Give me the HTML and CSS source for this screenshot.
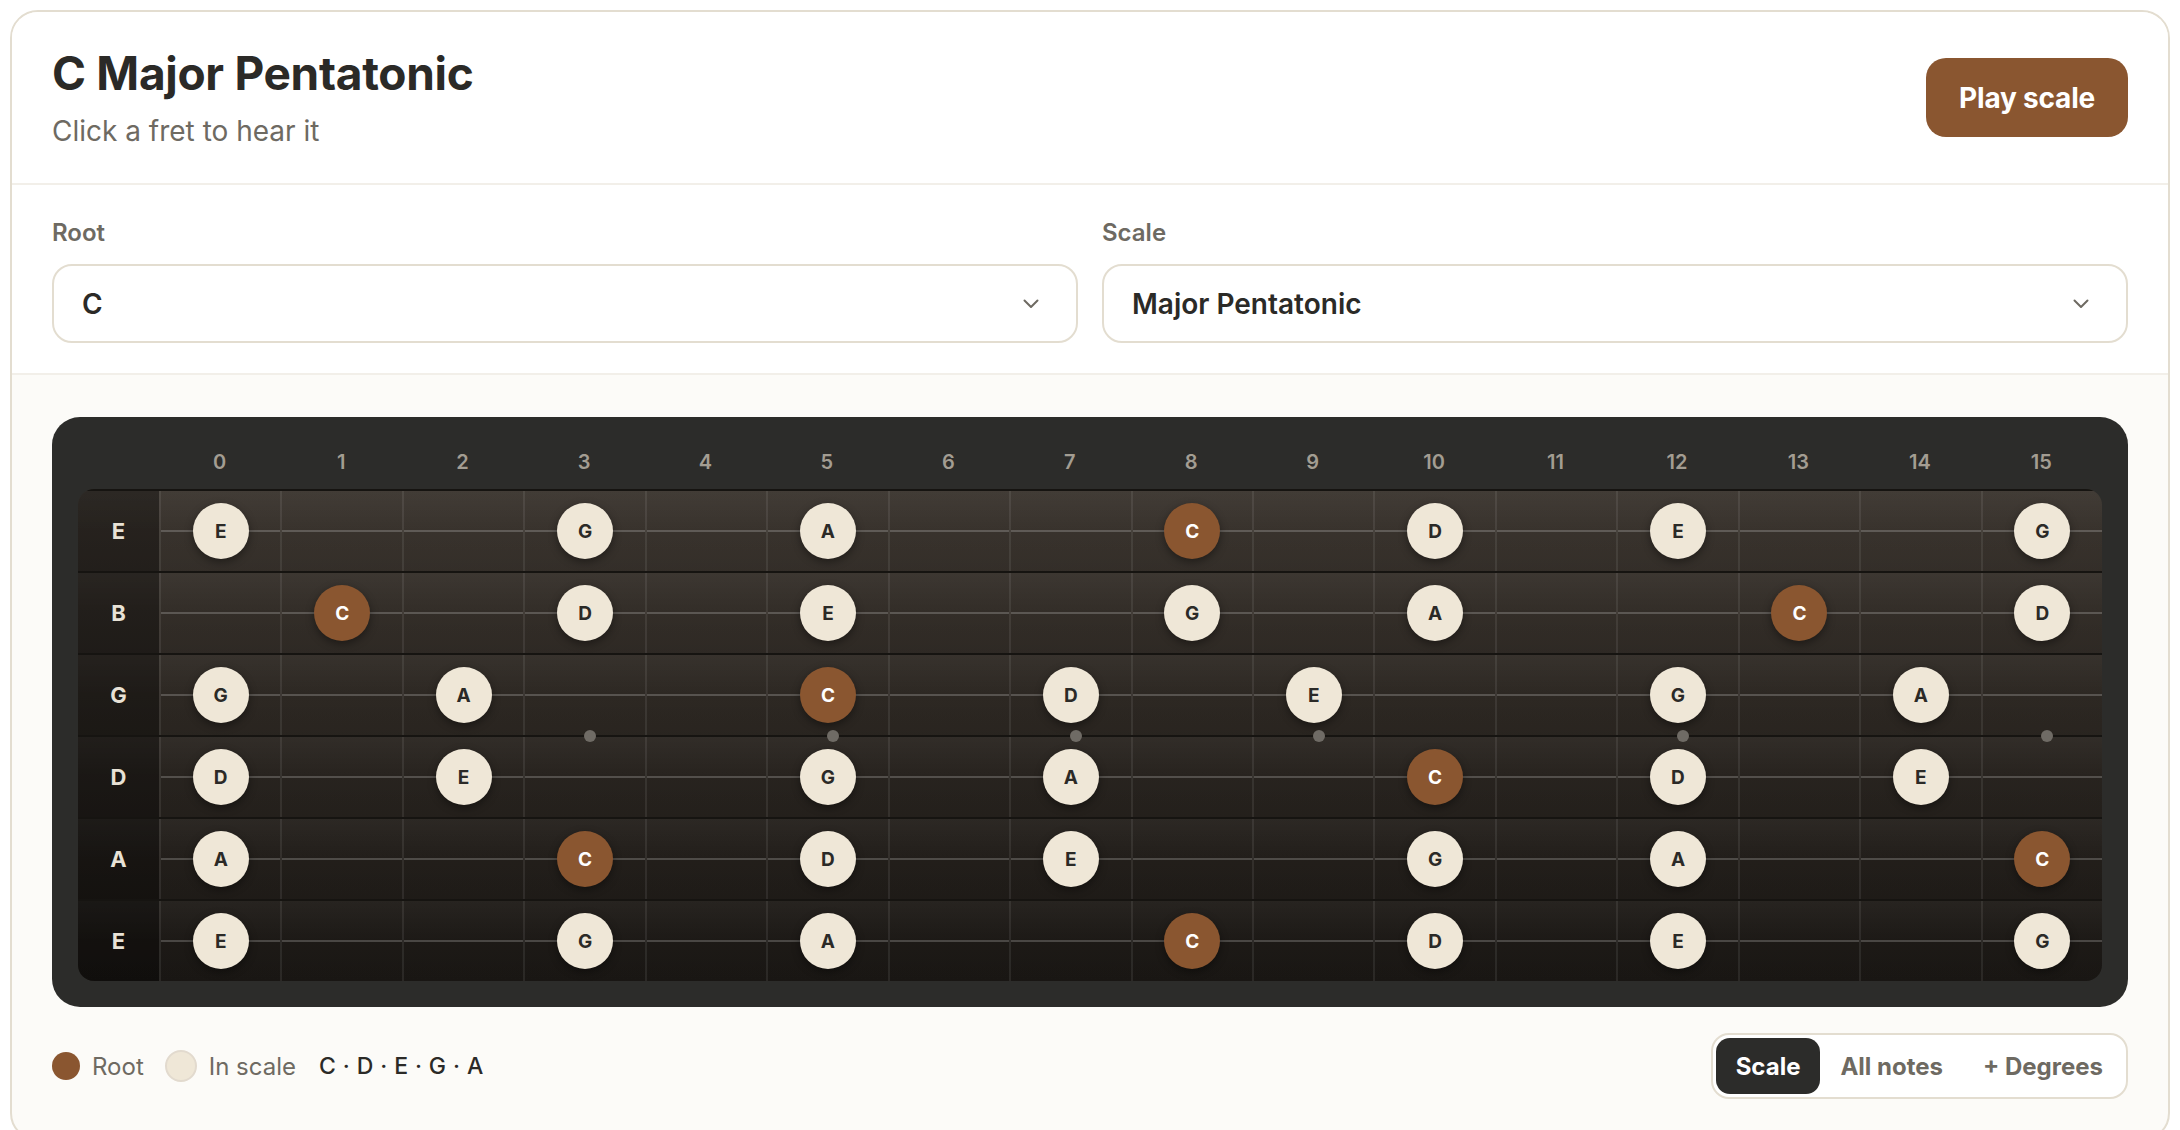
FILE: index.html
```html
<!DOCTYPE html>
<html lang="en">
<head>
<meta charset="utf-8">
<title>C Major Pentatonic</title>
<link rel="stylesheet" href="styles.css">
</head>
<body>
<div class="card">
  <header class="header">
    <div class="heading">
      <h1 class="title">C Major Pentatonic</h1>
      <p class="subtitle">Click a fret to hear it</p>
    </div>
    <button class="play">Play scale</button>
  </header>

  <section class="controls">
    <div class="field">
      <div class="label">Root</div>
      <div class="select"><span>C</span>
        <svg class="chev" width="16" height="10" viewBox="0 0 16 10"><path d="M1.5 1.5 L8 8 L14.5 1.5" fill="none" stroke="#6e6a62" stroke-width="2" stroke-linecap="round" stroke-linejoin="round"/></svg>
      </div>
    </div>
    <div class="field">
      <div class="label">Scale</div>
      <div class="select"><span>Major Pentatonic</span>
        <svg class="chev" width="16" height="10" viewBox="0 0 16 10"><path d="M1.5 1.5 L8 8 L14.5 1.5" fill="none" stroke="#6e6a62" stroke-width="2" stroke-linecap="round" stroke-linejoin="round"/></svg>
      </div>
    </div>
  </section>

  <section class="board-section">
    <div class="panel">
      <div class="numbers">
        <span>0</span><span>1</span><span>2</span><span>3</span><span>4</span><span>5</span><span>6</span><span>7</span><span>8</span><span>9</span><span>10</span><span>11</span><span>12</span><span>13</span><span>14</span><span>15</span>
      </div>
      <div class="board">
        <div class="string">
          <div class="sname">E</div>
          <div class="fret"><span class="note">E</span></div>
          <div class="fret"></div>
          <div class="fret"></div>
          <div class="fret"><span class="note">G</span></div>
          <div class="fret"></div>
          <div class="fret"><span class="note">A</span></div>
          <div class="fret"></div>
          <div class="fret"></div>
          <div class="fret"><span class="note root">C</span></div>
          <div class="fret"></div>
          <div class="fret"><span class="note">D</span></div>
          <div class="fret"></div>
          <div class="fret"><span class="note">E</span></div>
          <div class="fret"></div>
          <div class="fret"></div>
          <div class="fret"><span class="note">G</span></div>
        </div>
        <div class="string">
          <div class="sname">B</div>
          <div class="fret"></div>
          <div class="fret"><span class="note root">C</span></div>
          <div class="fret"></div>
          <div class="fret"><span class="note">D</span></div>
          <div class="fret"></div>
          <div class="fret"><span class="note">E</span></div>
          <div class="fret"></div>
          <div class="fret"></div>
          <div class="fret"><span class="note">G</span></div>
          <div class="fret"></div>
          <div class="fret"><span class="note">A</span></div>
          <div class="fret"></div>
          <div class="fret"></div>
          <div class="fret"><span class="note root">C</span></div>
          <div class="fret"></div>
          <div class="fret"><span class="note">D</span></div>
        </div>
        <div class="string">
          <div class="sname">G</div>
          <div class="fret"><span class="note">G</span></div>
          <div class="fret"></div>
          <div class="fret"><span class="note">A</span></div>
          <div class="fret inlay"></div>
          <div class="fret"></div>
          <div class="fret inlay"><span class="note root">C</span></div>
          <div class="fret"></div>
          <div class="fret inlay"><span class="note">D</span></div>
          <div class="fret"></div>
          <div class="fret inlay"><span class="note">E</span></div>
          <div class="fret"></div>
          <div class="fret"></div>
          <div class="fret inlay"><span class="note">G</span></div>
          <div class="fret"></div>
          <div class="fret"><span class="note">A</span></div>
          <div class="fret inlay"></div>
        </div>
        <div class="string">
          <div class="sname">D</div>
          <div class="fret"><span class="note">D</span></div>
          <div class="fret"></div>
          <div class="fret"><span class="note">E</span></div>
          <div class="fret"></div>
          <div class="fret"></div>
          <div class="fret"><span class="note">G</span></div>
          <div class="fret"></div>
          <div class="fret"><span class="note">A</span></div>
          <div class="fret"></div>
          <div class="fret"></div>
          <div class="fret"><span class="note root">C</span></div>
          <div class="fret"></div>
          <div class="fret"><span class="note">D</span></div>
          <div class="fret"></div>
          <div class="fret"><span class="note">E</span></div>
          <div class="fret"></div>
        </div>
        <div class="string">
          <div class="sname">A</div>
          <div class="fret"><span class="note">A</span></div>
          <div class="fret"></div>
          <div class="fret"></div>
          <div class="fret"><span class="note root">C</span></div>
          <div class="fret"></div>
          <div class="fret"><span class="note">D</span></div>
          <div class="fret"></div>
          <div class="fret"><span class="note">E</span></div>
          <div class="fret"></div>
          <div class="fret"></div>
          <div class="fret"><span class="note">G</span></div>
          <div class="fret"></div>
          <div class="fret"><span class="note">A</span></div>
          <div class="fret"></div>
          <div class="fret"></div>
          <div class="fret"><span class="note root">C</span></div>
        </div>
        <div class="string">
          <div class="sname">E</div>
          <div class="fret"><span class="note">E</span></div>
          <div class="fret"></div>
          <div class="fret"></div>
          <div class="fret"><span class="note">G</span></div>
          <div class="fret"></div>
          <div class="fret"><span class="note">A</span></div>
          <div class="fret"></div>
          <div class="fret"></div>
          <div class="fret"><span class="note root">C</span></div>
          <div class="fret"></div>
          <div class="fret"><span class="note">D</span></div>
          <div class="fret"></div>
          <div class="fret"><span class="note">E</span></div>
          <div class="fret"></div>
          <div class="fret"></div>
          <div class="fret"><span class="note">G</span></div>
        </div>
      </div>
    </div>

    <div class="legend">
      <div class="keys">
        <span class="key"><span class="dot dot-root"></span>Root</span>
        <span class="key"><span class="dot dot-scale"></span>In scale</span>
        <span class="notes-list">C · D · E · G · A</span>
      </div>
      <div class="toggle">
        <span class="tbtn active">Scale</span>
        <span class="tbtn">All notes</span>
        <span class="tbtn">+ Degrees</span>
      </div>
    </div>
  </section>
</div>
</body>
</html>
```

FILE: styles.css
```css
* { box-sizing: border-box; margin: 0; padding: 0; }
html, body { background: #ffffff; }
body {
  padding: 10px;
  font-family: Inter, "Noto Sans", "Liberation Sans", sans-serif;
  color: #2b2a27;
}

.card {
  border: 2px solid #e3ddd0;
  border-radius: 28px;
  overflow: hidden;
  background: #fcfbf8;
}

/* header */
.header {
  display: flex;
  justify-content: space-between;
  align-items: center;
  height: 173px;
  padding: 0 40px;
  background: #ffffff;
  border-bottom: 2px solid #f2efe9;
}
.heading { padding-bottom: 2px; }
.title {
  font-size: 46px;
  line-height: 54px;
  font-weight: 700;
  letter-spacing: -0.3px;
  color: #2b2a27;
}
.subtitle {
  margin-top: 14px;
  font-size: 28px;
  line-height: 34px;
  color: #6e6a62;
}
.play {
  height: 79px;
  padding: 0 33px;
  border: none;
  border-radius: 20px;
  background: #8a5630;
  color: #ffffff;
  font-family: inherit;
  font-size: 28px;
  font-weight: 700;
  letter-spacing: -0.2px;
}

/* controls */
.controls {
  display: grid;
  grid-template-columns: 1fr 1fr;
  gap: 24px;
  padding: 33px 40px 30px;
  background: #ffffff;
  border-bottom: 2px solid #f2efe9;
}
.label {
  font-size: 24px;
  line-height: 30px;
  font-weight: 600;
  color: #6e6a62;
  margin-bottom: 16px;
}
.select {
  height: 79px;
  display: flex;
  align-items: center;
  justify-content: space-between;
  padding: 0 37px 0 28px;
  border: 2px solid #e3ddd0;
  border-radius: 20px;
  background: #ffffff;
  font-size: 28px;
  font-weight: 600;
  color: #2b2a27;
}

/* fretboard */
.board-section {
  padding: 42px 40px 40px;
}
.panel {
  background: #2c2c2a;
  border-radius: 28px;
  padding: 26px;
}
.numbers {
  display: flex;
  padding-left: 81px;
  height: 38px;
  margin-bottom: 8px;
}
.numbers span {
  flex: 1;
  text-align: center;
  line-height: 38px;
  font-size: 20px;
  font-weight: 600;
  color: #a39d92;
}
.board {
  border-radius: 16px;
  overflow: hidden;
  background: linear-gradient(180deg, #3b352f 0%, #2c2722 45%, #1a1714 100%);
}
.string {
  display: flex;
  height: 82px;
  border-top: 2px solid #161411;
  background: linear-gradient(180deg, rgba(255,255,255,0.035) 0%, rgba(255,255,255,0.0) 50%, rgba(0,0,0,0.04) 100%);
}
.sname {
  flex: none;
  width: 81px;
  display: flex;
  align-items: center;
  justify-content: center;
  background: rgba(0,0,0,0.32);
  font-size: 22px;
  font-weight: 700;
  color: #e8e2d6;
}
.fret {
  flex: 1;
  position: relative;
  display: flex;
  align-items: center;
  justify-content: center;
  border-left: 2px solid rgba(255,255,255,0.08);
}
.fret::before {
  content: "";
  position: absolute;
  left: 0;
  right: 0;
  top: 50%;
  height: 2px;
  margin-top: -1px;
  background: rgba(255,255,255,0.2);
}
.fret.inlay::after {
  content: "";
  position: absolute;
  z-index: 2;
  bottom: -7px;
  left: calc(50% + 5px);
  width: 12px;
  height: 12px;
  margin-left: -6px;
  border-radius: 50%;
  background: #6f6b65;
}
.note {
  position: relative;
  z-index: 1;
  width: 56px;
  height: 56px;
  border-radius: 50%;
  display: flex;
  align-items: center;
  justify-content: center;
  background: #efe7d7;
  color: #2b2a27;
  font-size: 19px;
  font-weight: 700;
  box-shadow: 0 3px 8px rgba(0,0,0,0.4);
}
.note.root {
  background: #8a5630;
  color: #ffffff;
}

/* legend */
.legend {
  margin-top: 26px;
  display: flex;
  justify-content: space-between;
  align-items: center;
}
.keys {
  display: flex;
  align-items: center;
  gap: 21px;
}
.key {
  display: flex;
  align-items: center;
  gap: 12px;
  font-size: 24px;
  color: #6e6a62;
}
.dot {
  display: inline-block;
  width: 28px;
  height: 28px;
  border-radius: 50%;
}
.dot-root { background: #8a5630; }
.dot-scale {
  width: 32px;
  height: 32px;
  background: #efe7d7;
  border: 2px solid #e2dace;
}
.notes-list {
  margin-left: 2px;
  font-size: 23px;
  font-weight: 500;
  letter-spacing: 0.4px;
  color: #2b2a27;
}
.toggle {
  display: flex;
  height: 66px;
  padding: 3px;
  border: 2px solid #e3ddd0;
  border-radius: 18px;
  background: #ffffff;
}
.tbtn {
  display: flex;
  align-items: center;
  padding: 0 20px;
  border-radius: 14px;
  font-size: 24px;
  font-weight: 700;
  color: #6e6a62;
}
.tbtn.active {
  background: #2c2c2a;
  color: #ffffff;
}
```
